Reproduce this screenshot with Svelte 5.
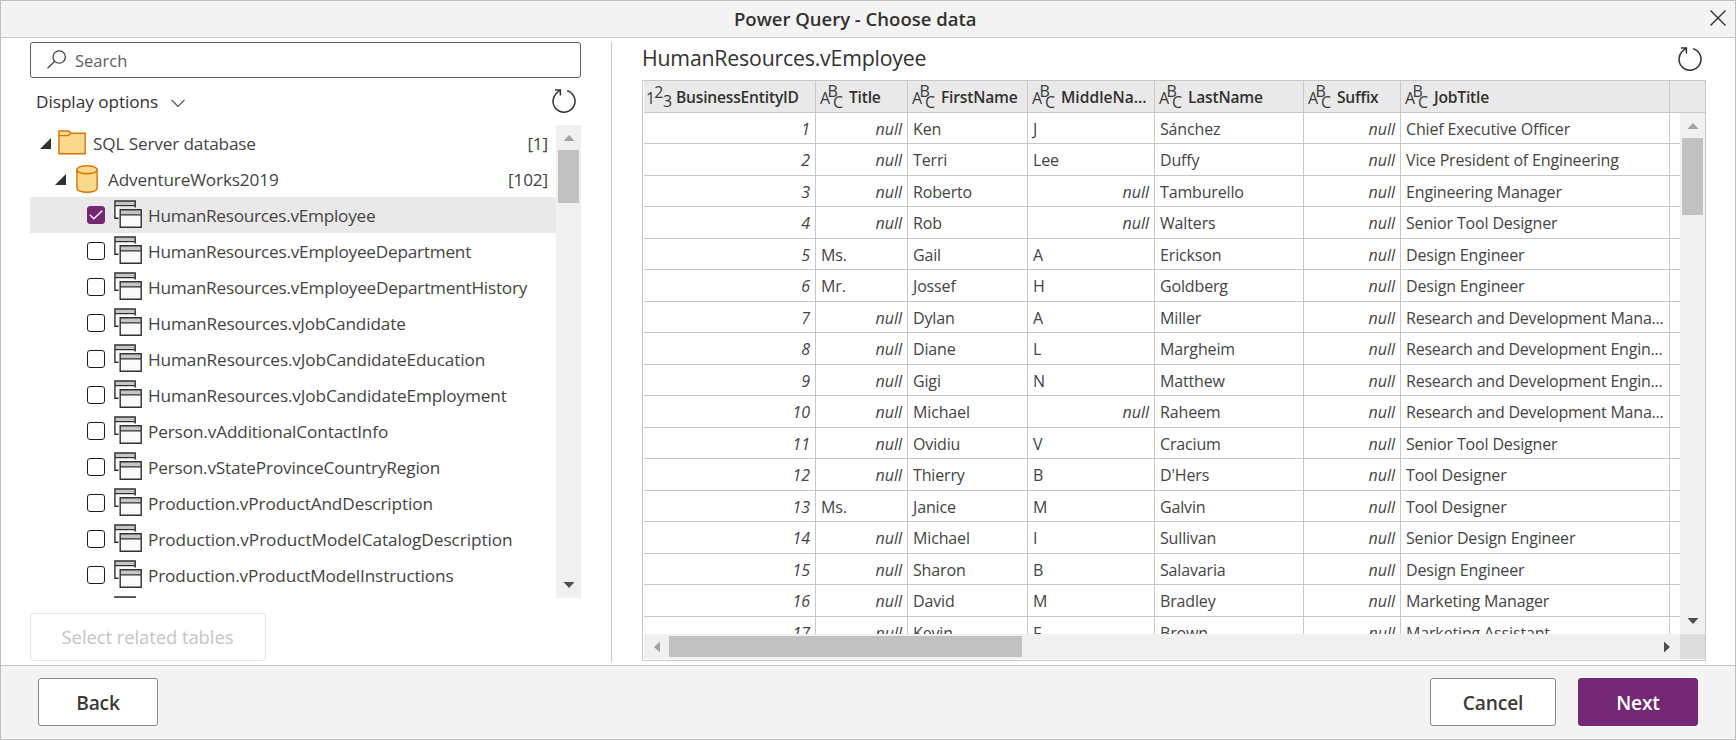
<script>
  const tree = [
    ['HumanResources.vEmployee', -0.25],
    ['HumanResources.vEmployeeDepartment', -0.23],
    ['HumanResources.vEmployeeDepartmentHistory', -0.22],
    ['HumanResources.vJobCandidate', -0.15],
    ['HumanResources.vJobCandidateEducation', -0.12],
    ['HumanResources.vJobCandidateEmployment', -0.12],
    ['Person.vAdditionalContactInfo', -0.13],
    ['Person.vStateProvinceCountryRegion', -0.17],
    ['Production.vProductAndDescription', -0.1],
    ['Production.vProductModelCatalogDescription', -0.05],
    ['Production.vProductModelInstructions', -0.12],
    ['Production.vProductModelInstructions', -0.12],
  ];

  const columns = ['BusinessEntityID', 'Title', 'FirstName', 'MiddleNa...', 'LastName', 'Suffix', 'JobTitle'];

  const people = [
    [null, 'Ken', 'J', 'Sánchez', 'Chief Executive Officer'],
    [null, 'Terri', 'Lee', 'Duffy', 'Vice President of Engineering'],
    [null, 'Roberto', null, 'Tamburello', 'Engineering Manager'],
    [null, 'Rob', null, 'Walters', 'Senior Tool Designer'],
    ['Ms.', 'Gail', 'A', 'Erickson', 'Design Engineer'],
    ['Mr.', 'Jossef', 'H', 'Goldberg', 'Design Engineer'],
    [null, 'Dylan', 'A', 'Miller', 'Research and Development Mana...'],
    [null, 'Diane', 'L', 'Margheim', 'Research and Development Engin...'],
    [null, 'Gigi', 'N', 'Matthew', 'Research and Development Engin...'],
    [null, 'Michael', null, 'Raheem', 'Research and Development Mana...'],
    [null, 'Ovidiu', 'V', 'Cracium', 'Senior Tool Designer'],
    [null, 'Thierry', 'B', "D'Hers", 'Tool Designer'],
    ['Ms.', 'Janice', 'M', 'Galvin', 'Tool Designer'],
    [null, 'Michael', 'I', 'Sullivan', 'Senior Design Engineer'],
    [null, 'Sharon', 'B', 'Salavaria', 'Design Engineer'],
    [null, 'David', 'M', 'Bradley', 'Marketing Manager'],
    [null, 'Kevin', 'F', 'Brown', 'Marketing Assistant'],
  ];
  const rows = people.map(([title, first, middle, last, job]) => [title, first, middle, last, null, job]);
</script>

{#snippet refresh()}
  <svg width="24" height="24" viewBox="0 0 24 24" fill="none" stroke="#323130" stroke-width="1.5">
    <path d="M15.2 1.7A11 11 0 1 1 3.9 4.8L8 1.2" />
    <path d="M3 .9H8.4V6.5" />
  </svg>
{/snippet}

{#snippet arrow(dir, color)}
  <svg class="arrow {dir}" width="12" height="12" viewBox="0 0 12 12"><path d="M0.5 9L6 3L11.5 9Z" fill={color} /></svg>
{/snippet}

<div class="dialog">
  <header>
    <h1>Power Query - Choose data</h1>
    <svg class="close" width="16" height="16" viewBox="0 0 16 16" stroke="#323130" stroke-width="1.4"><path d="M.5 .5L15.5 15.5M15.5 .5L.5 15.5" /></svg>
  </header>

  <main>
    <section class="navigator">
      <div class="search">
        <svg width="20" height="19" viewBox="0 0 20 19" fill="none" stroke="#484644" stroke-width="1.3">
          <circle cx="12.2" cy="7" r="6.2" /><path d="M7.8 11.3L.5 18.3" />
        </svg>
        <span>Search</span>
      </div>
      <div class="options">
        <span>Display options</span>
        <svg width="14" height="9" viewBox="0 0 14 9" fill="none" stroke="#484644" stroke-width="1.1"><path d="M.5 .8L7 7.5L13.5 .8" /></svg>
        <div class="reload">{@render refresh()}</div>
      </div>

      <div class="tree">
        <div class="nodes">
          <div class="node root">
            <svg width="11" height="11" viewBox="0 0 11 11"><path d="M11 0V11H0Z" fill="#323130" /></svg>
            <svg class="folder" width="28" height="25" viewBox="0 0 28 25" fill="#f8da8f" stroke="#e07000" stroke-width="1.4">
              <path d="M.9 5.6V1H10.8L13 3.2H27.2V23.8H.9Z" /><path d="M.9 5.6H10L13 3.2" fill="none" />
            </svg>
            <span>SQL Server database</span><b>[1]</b>
          </div>
          <div class="node db">
            <svg width="11" height="11" viewBox="0 0 11 11"><path d="M11 0V11H0Z" fill="#323130" /></svg>
            <svg class="cyl" width="22" height="28" viewBox="0 0 22 28" fill="#f8da8f" stroke="#e07000" stroke-width="1.4">
              <path d="M.9 4.8V23.2C.9 25.5 5.3 27.2 11 27.2S21.1 25.5 21.1 23.2V4.8" />
              <ellipse cx="11" cy="4.8" rx="10.1" ry="4" />
            </svg>
            <span>AdventureWorks2019</span><b>[102]</b>
          </div>
          {#each tree as [name, spacing], i}
            <div class="node view" class:selected={i === 0}>
              <i class="check" class:on={i === 0}>
                {#if i === 0}
                  <svg width="14" height="10" viewBox="0 0 14 10" fill="none" stroke="#fff" stroke-width="1.4"><path d="M.8 4.8L4.9 8.8L13.2 .8" /></svg>
                {/if}
              </i>
              <svg width="28" height="28" viewBox="0 0 28 28">
                <path d="M.9 1H21.2V7H6V19H.9Z" fill="#fafafa" />
                <path d="M.9 1H21.2V5.6H.9Z" fill="#c8c6c4" />
                <path d="M4.6 18.2H.9V1H21.2V7.6M.9 5.6H21.2" fill="none" stroke="#323130" stroke-width="1.4" />
                <path d="M6.2 9.8H27.2V27.2H6.2Z" fill="#fafafa" />
                <path d="M6.2 9.8H27.2V14.9H6.2Z" fill="#c8c6c4" />
                <path d="M6.2 9.8H27.2V27.2H6.2ZM6.2 14.9H27.2" fill="none" stroke="#323130" stroke-width="1.4" />
              </svg>
              <span style="letter-spacing:{spacing}px">{name}</span>
            </div>
          {/each}
        </div>
        <div class="vbar">
          {@render arrow('up', '#a3a3a3')}
          <div class="thumb"></div>
          {@render arrow('down', '#505050')}
        </div>
      </div>

      <button class="related" disabled>Select related tables</button>
    </section>

    <section class="preview">
      <div class="heading"><h2>HumanResources.vEmployee</h2>{@render refresh()}</div>
      <div class="grid">
        <div class="line head">
          {#each columns as name, i}
            <div class="cell">
              <svg width="26" height="30" viewBox="0 0 26 30" fill="#3b3a39">
                {#if i === 0}
                  <text x="-1" y="21.8">1</text><text x="7.3" y="16">2</text><text x="16" y="24.6">3</text>
                {:else}
                  <text x="0" y="21.8">A</text><text x="7.4" y="15.2">B</text><text x="13" y="26.4">C</text>
                {/if}
              </svg>
              <span class:wide={i === 3}>{name}</span>
            </div>
          {/each}
        </div>
        <div class="body">
          <div class="rows">
            {#each rows as row, r}
              <div class="line" class:tall={r % 2 === 1}>
                <div class="cell num">{r + 1}</div>
                {#each row as value}
                  <div class="cell" class:num={value === null} class:tight={value?.endsWith('...')}>{value ?? 'null'}</div>
                {/each}
              </div>
            {/each}
          </div>
          <div class="vbar">
            {@render arrow('up', '#a3a3a3')}
            <div class="thumb"></div>
            {@render arrow('down', '#505050')}
          </div>
        </div>
        <div class="hbar">
          <div class="track">
            {@render arrow('left', '#a3a3a3')}
            <div class="thumb"></div>
            {@render arrow('right', '#505050')}
          </div>
          <div class="corner"></div>
        </div>
      </div>
    </section>
  </main>

  <footer>
    <button class="back">Back</button>
    <button class="cancel">Cancel</button>
    <button class="next">Next</button>
  </footer>
</div>

<style>
  :global(body) { margin: 0; }
  * { box-sizing: border-box; }
  svg { display: block; flex: none; }
  .dialog {
    width: 1736px; height: 740px; border: 1px solid #bebebe; background: #fff;
    display: flex; flex-direction: column; overflow: hidden;
    font-family: "Open Sans", "Noto Sans", sans-serif; color: #323130; white-space: nowrap;
  }
  header {
    height: 37px; flex: none; background: #f3f3f3; border-bottom: 1px solid #c8c8c8;
    display: flex; align-items: center; padding: 0 9px 0 733px;
  }
  h1 { margin: 0; font-size: 18.5px; font-weight: 600; line-height: 36px; }
  .close { margin-left: auto; margin-top: -2px; }
  main { height: 627px; flex: none; display: flex; padding: 4px 30px 3px 29px; }

  .navigator {
    width: 582px; flex: none; border-right: 1px solid #c8c8c8; padding-right: 30px;
    display: flex; flex-direction: column; align-items: flex-start;
  }
  .search {
    width: 551px; height: 36px; border: 1px solid #605e5c; border-radius: 3px;
    display: flex; align-items: center; gap: 8px; padding: 0 16px; font-size: 16.5px; color: #605e5c;
  }
  .search > svg { margin-top: -1px; }
  .options { width: 551px; height: 47px; display: flex; align-items: center; padding: 0 5px 0 6px; font-size: 17.2px; letter-spacing: -.04px; }
  .options > svg { margin: 3px 0 0 13px; }
  .reload { margin: -2px 0 0 auto; }
  .tree { width: 551px; height: 473px; flex: none; display: flex; overflow: hidden; }
  .nodes { width: 526px; height: 473px; overflow: hidden; }
  .node { height: 36px; display: flex; align-items: center; font-size: 17.2px; color: #444; }
  .node b { font-weight: 400; margin-left: auto; margin-right: 8px; }
  .root { padding-left: 10px; letter-spacing: -.15px; }
  .folder { margin: -1px 7px 0; }
  .db { padding-left: 25px; letter-spacing: -.15px; }
  .cyl { margin: -1px 10px 0 10px; }
  .view { padding-left: 57px; }
  .view > svg { margin: -2px 6px 0 9px; }
  .selected { background: #e9e9e9; }
  .check { width: 18px; height: 18px; border: 1px solid #201f1e; border-radius: 3px; background: #fff; display: flex; align-items: center; justify-content: center; }
  .check.on { background: #742774; border-color: #742774; }
  .related {
    width: 236px; height: 48px; margin: 15px 0 0; border: 1px solid #e6e6e6; border-radius: 3px;
    background: #fff; color: #c4c4c4; font-family: inherit; font-size: 18.5px; letter-spacing: -.1px; padding: 0 1px 2px 0;
  }

  .vbar { width: 25px; flex: none; background: #f0f0f0; display: flex; flex-direction: column; align-items: center; padding: 7px 0; }
  .tree .vbar .thumb { width: 21px; height: 53px; margin-top: 6px; background: #c1c1c1; }
  .vbar .down { margin-top: auto; }
  .down { transform: rotate(180deg); }
  .left { transform: rotate(-90deg); }
  .right { transform: rotate(90deg); margin-left: auto; }

  .preview { width: 1064px; margin-left: 30px; }
  .heading { height: 38px; display: flex; justify-content: space-between; padding: 0 4px 0 0; }
  .heading svg { margin-top: 5px; }
  h2 { margin: 0; font-size: 21.3px; font-weight: 400; letter-spacing: -.2px; line-height: 31px; }
  .grid { width: 1064px; height: 581px; border: 1px solid #c8c8c8; padding: 0 0 1px 1px; }
  .line { display: grid; grid-template-columns: 172px 92px 120px 127px 149px 97px 269px 1fr; height: 31px; border-bottom: 1px solid #c8c8c8; font-size: 16px; letter-spacing: -.15px; color: #444; }
  .line.tall { height: 32px; }
  .cell { border-right: 1px solid #c8c8c8; padding: 1px 5px 0; display: flex; align-items: center; overflow: hidden; }
  .tall .cell { padding-top: 0; }
  .num { justify-content: flex-end; font-style: italic; letter-spacing: 0; }
  .tight { letter-spacing: -.21px; }
  .head { height: 32px; background: #e9e9e9; font-size: 15.6px; font-weight: 600; letter-spacing: -.2px; color: #323130; }
  .head .cell { padding: 0 0 0 4px; }
  .head .cell span { padding-top: 1px; margin-left: 3px; }
  .head .cell .wide { letter-spacing: 0; }
  .head .cell:first-child { padding-left: 3px; }
  .head svg { overflow: visible; font-size: 16px; font-weight: 400; letter-spacing: 0; }
  .body { display: flex; height: 521px; overflow: hidden; }
  .rows { width: 1036px; height: 521px; overflow: hidden; }
  .body .vbar .thumb { width: 21px; height: 77px; margin-top: 6px; background: #c1c1c1; }
  .hbar { display: flex; height: 25px; }
  .track { width: 1036px; background: #f0f0f0; display: flex; align-items: center; padding: 0 7px; }
  .track .thumb { width: 353px; height: 21px; margin-left: 6px; background: #c1c1c1; }
  .corner { width: 25px; background: #dcdcdc; }

  footer { flex: 1; background: #f3f3f3; border-top: 1px solid #c8c8c8; border-bottom: 1px solid #fff; display: flex; padding: 12px 37px 0; }
  footer button { height: 48px; border: 1px solid #8a8886; border-radius: 3px; background: #fff; color: #3b3a39; font: 600 19.2px "Open Sans", sans-serif; letter-spacing: -.15px; padding: 1px 0 0; margin: 0; }
  .back { width: 120px; }
  .cancel { width: 126px; margin-left: auto; }
  .next { width: 120px; margin-left: 22px; background: #742774; border-color: #742774; color: #fff; }
</style>
